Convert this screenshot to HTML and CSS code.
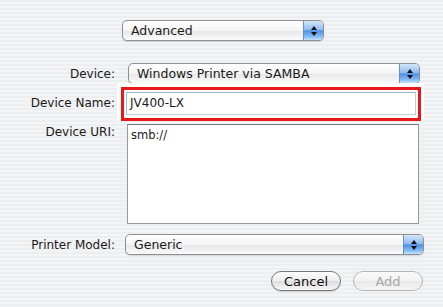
FILE: index.html
```html
<!DOCTYPE html>
<html lang="en">

<head>
    <meta charset="UTF-8">
    <meta name="viewport" content="width=device-width, initial-scale=1.0">
    <title>Add Printer</title>
    <link rel="stylesheet" href="styles.css">
</head>

<body>

    <div class="sheet">
        <div class="top">
            <div class="popup popup-mode">
                <span class="popup-text">Advanced</span>
                <span class="popup-arrows"><i class="up"></i><i class="down"></i></span>
            </div>
        </div>

        <div class="form">
            <label class="label">Device:</label>
            <div class="popup popup-device">
                <span class="popup-text">Windows Printer via SAMBA</span>
                <span class="popup-arrows"><i class="up"></i><i class="down"></i></span>
            </div>

            <label class="label">Device Name:</label>
            <div class="highlight">
                <div class="mark">
                    <div class="field">JV400-LX</div>
                </div>
            </div>

            <label class="label label-top">Device URI:</label>
            <div class="area">smb://</div>

            <label class="label label-model">Printer Model:</label>
            <div class="popup popup-model">
                <span class="popup-text">Generic</span>
                <span class="popup-arrows"><i class="up"></i><i class="down"></i></span>
            </div>
        </div>

        <div class="buttons">
            <button class="btn">Cancel</button>
            <button class="btn btn-off">Add</button>
        </div>
    </div>

</body>

</html>
```

FILE: styles.css
```css
html,
body {
    margin: 0;
    padding: 0;
    width: 100%;
    height: 100%;
}

body {
    font-family: "DejaVu Sans", "Liberation Sans", sans-serif;
    font-size: 12px;
    color: #1a1a1a;
    background: repeating-linear-gradient(#eceeef 0, #eceeef 2px, #f3f4f5 2px, #f3f4f5 4px);
    overflow: hidden;
}

.sheet {
    padding-top: 20px;
}

.top {
    padding-left: 122px;
}

/* popup menus */
.popup {
    display: flex;
    align-items: stretch;
    height: 19px;
    border: 1px solid #8d8f92;
    border-radius: 5px;
    background: linear-gradient(#ffffff, #f4f4f4 50%, #e6e6e6 51%, #fbfbfb);
    box-shadow: 0 1px 1px rgba(0, 0, 0, 0.12);
    overflow: hidden;
}

.popup-text {
    flex: 1;
    padding-left: 8px;
    line-height: 19px;
    font-size: 12.5px;
    white-space: nowrap;
}

.popup-arrows {
    width: 19px;
    display: flex;
    flex-direction: column;
    align-items: center;
    justify-content: center;
    gap: 2px;
    border-left: 1px solid #6d8fbf;
    background: linear-gradient(#d4e6fa, #8fbdf0 45%, #4f90e3 52%, #7fb8f2 80%, #c6e3fc);
}

.popup-arrows i {
    display: block;
    width: 0;
    height: 0;
    border-left: 3px solid transparent;
    border-right: 3px solid transparent;
}

.popup-arrows .up {
    border-bottom: 4px solid #111;
}

.popup-arrows .down {
    border-top: 4px solid #111;
}

.popup-mode {
    width: 200px;
}

.popup-device {
    margin: 0 4px 0 11px;
}

.popup-model {
    margin: 0 0 0 8px;
}

/* form */
.form {
    display: grid;
    grid-template-columns: 115px 1fr;
    column-gap: 2px;
    padding-right: 19px;
    margin-top: 22px;
}

.label {
    text-align: right;
    align-self: center;
    white-space: nowrap;
}

.label-top {
    align-self: start;
    padding-top: 4px;
}

.label-model {
    margin-top: 10px;
}

.highlight {
    margin-top: -1px;
    height: 38px;
    padding: 4px 3px 0 4px;
    box-sizing: border-box;
    background: #fff;
}

.mark {
    border: 3px solid #e8171a;
    padding: 2px;
    height: 24px;
}

.field {
    height: 21px;
    line-height: 21px;
    padding-left: 3px;
    border: 1px solid #c5cdd4;
    border-top-color: #9db3c6;
    border-left-color: #a9bfd2;
    background: #fff;
}

.area {
    margin: 3px 5px 0 10px;
    height: 92px;
    padding: 3px 3px;
    font-size: 11.5px;
    border: 1px solid #9a9a9a;
    border-top-color: #777;
    background: #fff;
}

.popup-model {
    margin-top: 10px;
}

/* buttons */
.buttons {
    display: flex;
    justify-content: flex-end;
    gap: 12px;
    padding-right: 20px;
    margin-top: 16px;
}

.btn {
    width: 70px;
    height: 20px;
    padding: 0;
    font-family: inherit;
    font-size: 13px;
    color: #111;
    border: 1px solid #777;
    border-radius: 10px;
    background: linear-gradient(#fdfdfd, #eeeeee 50%, #dedede 52%, #f7f7f7);
    box-shadow: 0 1px 1px rgba(0, 0, 0, 0.15);
}

.btn-off {
    color: #a8a8a8;
    border-color: #b5b5b5;
    background: linear-gradient(#fafafa, #f2f2f2 50%, #e9e9e9 52%, #f7f7f7);
    box-shadow: none;
}
```
